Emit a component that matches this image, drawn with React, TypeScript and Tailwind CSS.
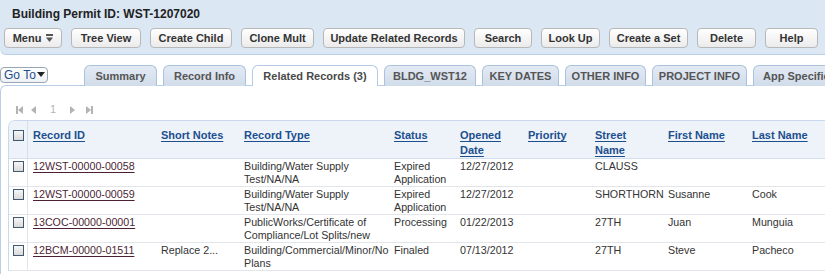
import React from "react";

const toolbar = [
  { label: "Tree View", w: "w-[70px]" },
  { label: "Create Child", w: "w-[82px]" },
  { label: "Clone Mult", w: "w-[73px]" },
  { label: "Update Related Records", w: "w-[142px]" },
  { label: "Search", w: "w-[58px]" },
  { label: "Look Up", w: "w-[59px]" },
  { label: "Create a Set", w: "w-[79px]" },
  { label: "Delete", w: "w-[59px]" },
  { label: "Help", w: "w-[53px]" },
];

const tabs = [
  { label: "Summary", w: "w-[73px]" },
  { label: "Record Info", w: "w-[83px]" },
  { label: "Related Records (3)", w: "w-[126px]", active: true },
  { label: "BLDG_WST12", w: "w-[92px]" },
  { label: "KEY DATES", w: "w-[77px]" },
  { label: "OTHER INFO", w: "w-[81px]" },
  { label: "PROJECT INFO", w: "w-[95px]" },
  { label: "App Specific Info", w: "w-[110px]" },
];

interface Row {
  id: string;
  notes: string;
  type: string[];
  status: string[];
  opened: string;
  street: string;
  first: string;
  last: string;
}

const rows: Row[] = [
  {
    id: "12WST-00000-00058",
    notes: "",
    type: ["Building/Water Supply", "Test/NA/NA"],
    status: ["Expired", "Application"],
    opened: "12/27/2012",
    street: "CLAUSS",
    first: "",
    last: "",
  },
  {
    id: "12WST-00000-00059",
    notes: "",
    type: ["Building/Water Supply", "Test/NA/NA"],
    status: ["Expired", "Application"],
    opened: "12/27/2012",
    street: "SHORTHORN",
    first: "Susanne",
    last: "Cook",
  },
  {
    id: "13COC-00000-00001",
    notes: "",
    type: ["PublicWorks/Certificate of", "Compliance/Lot Splits/new"],
    status: ["Processing"],
    opened: "01/22/2013",
    street: "27TH",
    first: "Juan",
    last: "Munguia",
  },
  {
    id: "12BCM-00000-01511",
    notes: "Replace 2...",
    type: ["Building/Commercial/Minor/No", "Plans"],
    status: ["Finaled"],
    opened: "07/13/2012",
    street: "27TH",
    first: "Steve",
    last: "Pacheco",
  },
];

const Checkbox = () => (
  <span className="block w-[11px] h-[11px] border border-[#3f5874] bg-gradient-to-b from-[#f7f7f7] to-[#d9d9d9]" />
);

const Lines = ({ lines }: { lines: string[] }) => (
  <>
    {lines.map((l, i) => (
      <div key={i} className="whitespace-nowrap">
        {l}
      </div>
    ))}
  </>
);

// column widths add up to the table width (869px)
const headers: { label: string[]; w: string }[] = [
  { label: ["Record ID"], w: "w-[128px]" },
  { label: ["Short Notes"], w: "w-[83px]" },
  { label: ["Record Type"], w: "w-[150px]" },
  { label: ["Status"], w: "w-[66px]" },
  { label: ["Opened", "Date"], w: "w-[68px]" },
  { label: ["Priority"], w: "w-[67px]" },
  { label: ["Street", "Name"], w: "w-[73px]" },
  { label: ["First Name"], w: "w-[84px]" },
  { label: ["Last Name"], w: "w-[131px]" },
];

export default function App() {
  return (
    <div className="w-[825px] h-[274px] overflow-hidden bg-white font-['Liberation_Sans',Arial,sans-serif] text-[#333]">
      {/* record header */}
      <div className="w-[860px] h-[55px] bg-[#dce7f4] border-b border-[#b9cfe8] rounded-bl-[6px] pt-[7px]">
        <h1 className="ml-[12px] text-[12px] font-bold leading-[14px] text-[#222]">
          Building Permit ID: WST-1207020
        </h1>
        <div className="flex gap-[9px] ml-[4px] mt-[7px]">
          <button className="w-[58px] shrink-0 h-[20px] flex items-center justify-center gap-[5px] rounded-[4px] border border-[#b8b8b8] bg-gradient-to-b from-white to-[#ebebeb] text-[11px] font-bold text-[#333]">
            Menu
            <svg width="7" height="8" viewBox="0 0 7 8">
              <rect x="0" y="0" width="7" height="2" fill="#555" />
              <path d="M0 3.5 H7 L3.5 8 Z" fill="#555" />
            </svg>
          </button>
          {toolbar.map((b) => (
            <button
              key={b.label}
              className={`${b.w} shrink-0 h-[20px] flex items-center justify-center whitespace-nowrap rounded-[4px] border border-[#b8b8b8] bg-gradient-to-b from-white to-[#ebebeb] text-[11px] font-bold text-[#333]`}
            >
              {b.label}
            </button>
          ))}
        </div>
      </div>

      {/* tabs */}
      <div className="flex items-start mt-[10px] h-[20px] w-[900px]">
        <button className="w-[48px] shrink-0 h-[16px] mt-[2px] flex items-center pl-[3px] whitespace-nowrap rounded-[4px] border border-[#9aa5b2] bg-gradient-to-b from-white to-[#eef1f5] text-[12px] leading-[14px] text-[#1c4f8e]">
          Go To
          <svg width="8" height="6" viewBox="0 0 8 6" className="ml-[1px] shrink-0">
            <path d="M0 0 H8 L4 5 Z" fill="#222" />
          </svg>
        </button>
        <div className="flex shrink-0 gap-[6px] ml-[36px] relative z-10">
          {tabs.map((t) => (
            <div
              key={t.label}
              className={`${t.w} shrink-0 h-[21px] flex items-center justify-center whitespace-nowrap overflow-hidden rounded-t-[6px] border border-b-0 text-[11px] font-bold ${
                t.active
                  ? "bg-white border-[#b3cbe6] text-[#4a4a4a]"
                  : "bg-gradient-to-b from-[#e3eaf4] to-[#d1dcea] border-[#a9c2de] text-[#555]"
              }`}
            >
              {t.label}
            </div>
          ))}
        </div>
      </div>

      {/* content panel */}
      <div className="border-t border-l border-[#b9cfe8] rounded-tl-[6px] w-[860px] h-[200px]">
        <div className="flex items-center h-[34px] pt-[13px] pl-[15px] text-[#b3b3b3]">
          <svg width="7" height="8" viewBox="0 0 7 8" className="mr-[8px]">
            <rect x="0" y="0" width="2" height="8" fill="#b3b3b3" />
            <path d="M7 0 V8 L2 4 Z" fill="#b3b3b3" />
          </svg>
          <svg width="5" height="8" viewBox="0 0 5 8" className="mr-[14px]">
            <path d="M5 0 V8 L0 4 Z" fill="#b3b3b3" />
          </svg>
          <span className="text-[11px] mr-[14px]">1</span>
          <svg width="5" height="8" viewBox="0 0 5 8" className="mr-[11px]">
            <path d="M0 0 V8 L5 4 Z" fill="#b3b3b3" />
          </svg>
          <svg width="7" height="8" viewBox="0 0 7 8">
            <path d="M0 0 V8 L5 4 Z" fill="#b3b3b3" />
            <rect x="5" y="0" width="2" height="8" fill="#b3b3b3" />
          </svg>
        </div>

        <div className="ml-[7px] w-[850px] border-t border-l border-[#c8d9ed] rounded-tl-[7px] overflow-hidden">
          <table className="w-[869px] table-fixed border-separate border-spacing-0 text-left">
            <thead>
              <tr className="bg-[#eef3fa]">
                <th className="w-[19px] h-[35px] align-top pt-[9px] pl-[4px] border-r border-b border-[#d3dfed]">
                  <Checkbox />
                </th>
                {headers.map((h) => (
                  <th
                    key={h.label.join(" ")}
                    className={`${h.w} h-[35px] align-top pt-[7px] pl-[5px] border-b border-[#d3dfed] text-[11px] leading-[15px] font-bold text-[#1c4f8e]`}
                  >
                    {h.label.map((l) => (
                      <div key={l}>
                        <span className="underline underline-offset-[2px] whitespace-nowrap">{l}</span>
                      </div>
                    ))}
                  </th>
                ))}
              </tr>
            </thead>
            <tbody className="text-[10.7px] leading-[13px]">
              {rows.map((r) => (
                <tr key={r.id}>
                  <td className="align-top pt-[2px] pl-[4px] border-r border-b border-[#e2e6eb]">
                    <Checkbox />
                  </td>
                  <td className="align-top pt-[1px] pl-[5px] border-b border-[#e2e6eb]">
                    <span className="underline underline-offset-[2px] text-[#4d1f35] whitespace-nowrap">{r.id}</span>
                  </td>
                  <td className="align-top pt-[1px] pl-[5px] border-b border-[#e2e6eb] whitespace-nowrap">{r.notes}</td>
                  <td className="align-top pt-[1px] pl-[5px] border-b border-[#e2e6eb]">
                    <Lines lines={r.type} />
                  </td>
                  <td className="align-top pt-[1px] pl-[5px] border-b border-[#e2e6eb]">
                    <Lines lines={r.status} />
                  </td>
                  <td className="align-top pt-[1px] pl-[5px] border-b border-[#e2e6eb]">{r.opened}</td>
                  <td className="align-top pt-[1px] pl-[5px] border-b border-[#e2e6eb]"></td>
                  <td className="align-top pt-[1px] pl-[5px] border-b border-[#e2e6eb] whitespace-nowrap">{r.street}</td>
                  <td className="align-top pt-[1px] pl-[5px] border-b border-[#e2e6eb]">{r.first}</td>
                  <td className="align-top pt-[1px] pl-[5px] border-b border-[#e2e6eb]">{r.last}</td>
                </tr>
              ))}
            </tbody>
          </table>
        </div>
      </div>
    </div>
  );
}
